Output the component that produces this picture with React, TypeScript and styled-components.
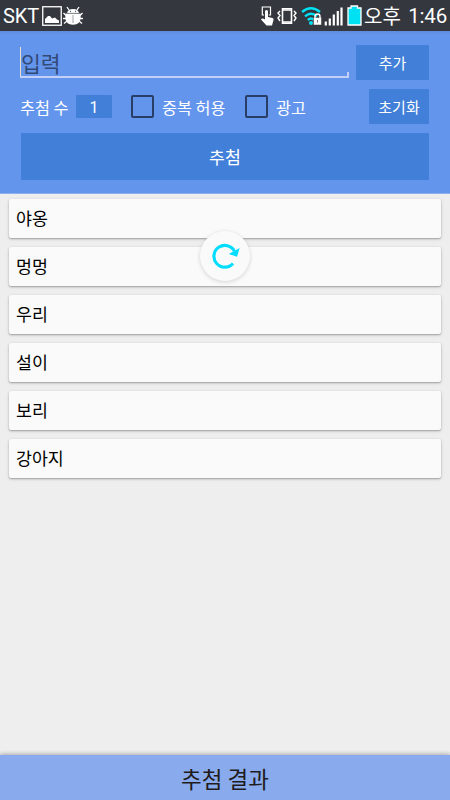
import React from "react";
import styled, { createGlobalStyle } from "styled-components";

const GlobalStyle = createGlobalStyle`
  * { box-sizing: border-box; }
  body { margin: 0; }
  button { border: 0; padding: 0; font-family: inherit; }
`;

const Screen = styled.div`
  display: flex;
  flex-direction: column;
  width: 450px;
  height: 800px;
  overflow: hidden;
  background: #eeeeee;
  font-family: "Noto Sans CJK KR", sans-serif;
  color: #fff;
`;

const StatusBar = styled.div`
  display: flex;
  align-items: center;
  flex: none;
  height: 31px;
  padding: 0 3px;
  background: #34373e;
  line-height: 30px;
`;

const Carrier = styled.span`
  width: 39px;
  font: 20px/34px Roboto, sans-serif;
  letter-spacing: -0.1px;
`;

const StatusIcons = styled.div`
  display: flex;
  align-items: center;
  margin-left: auto;
`;

const Meridiem = styled.span`
  width: 46px;
  padding-left: 2px;
  font-size: 20px;
  line-height: 29px;
  white-space: nowrap;
`;

const Clock = styled.span`
  width: 39px;
  font: 20.5px/34px Roboto, sans-serif;
  text-align: right;
  letter-spacing: -0.2px;
`;

const Controls = styled.div`
  flex: none;
  height: 163px;
  padding: 14px 21px 0;
  background: linear-gradient(#5f8cdd, #6495ed 4px);
  border-bottom: 1px solid #8eb0ee;
`;

const InputRow = styled.div`
  display: flex;
  justify-content: space-between;
  height: 35px;
`;

const Field = styled.div`
  width: 329px;
  height: 33px;
  margin-left: -1px;
  padding-left: 1px;
  border-bottom: 2px solid #c3cff6;
  background:
    linear-gradient(#e9dcc8, #e9dcc8) left 2px / 1px 30px no-repeat,
    linear-gradient(#c3cff6, #c3cff6) right bottom / 2px 4px no-repeat;
  color: #314a76;
  font-size: 21.5px;
  line-height: 35px;
`;

const ActionButton = styled.button<{ $width: number }>`
  width: ${(p) => p.$width}px;
  height: 35px;
  flex: none;
  border-radius: 1px;
  background: #417fd8;
  color: #fff;
  font-size: 15px;
  line-height: 35px;
`;

const OptionsRow = styled.div`
  display: flex;
  align-items: center;
  height: 35px;
  margin-top: 9px;
`;

const OptionLabel = styled.span<{ $width: number }>`
  width: ${(p) => p.$width}px;
  flex: none;
  margin-left: -1px;
  font-size: 16.3px;
  line-height: 34px;
  white-space: nowrap;
`;

const Count = styled.span`
  width: 36px;
  height: 23px;
  margin-right: 19px;
  border-radius: 1px;
  background: #417fd8;
  font: 16px/25px Roboto, sans-serif;
  text-align: center;
`;

const Checkbox = styled.span`
  width: 23px;
  height: 23px;
  flex: none;
  margin-right: 9px;
  border: 2px solid #283e66;
  border-radius: 2px;
`;

const DrawButton = styled.button`
  display: block;
  width: 408px;
  height: 47px;
  margin-top: 9px;
  border-radius: 1px;
  background: #417fd8;
  color: #fff;
  font-size: 17.3px;
  line-height: 47px;
`;

const ListArea = styled.div`
  position: relative;
  flex: 1;
  padding: 5px 9px;
`;

const Card = styled.div`
  height: 39px;
  margin-bottom: 9px;
  padding-left: 7px;
  border-radius: 2px;
  background: #fafafa;
  box-shadow: 0 1px 2px rgba(0, 0, 0, 0.3), 0 1px 4px rgba(0, 0, 0, 0.08);
  color: #000;
  font-size: 17.3px;
  line-height: 38px;
`;

const RefreshBadge = styled.div`
  position: absolute;
  top: 37px;
  left: 200px;
  width: 50px;
  height: 50px;
  border-radius: 50%;
  background: #fafafa;
  box-shadow: 0 1px 4px rgba(0, 0, 0, 0.16);
`;

const ResultBar = styled.div`
  flex: none;
  height: 45px;
  background: #89abed;
  box-shadow: 0 -1px 4px rgba(0, 0, 0, 0.3);
  color: #211b1b;
  font-size: 22.5px;
  line-height: 46px;
  text-align: center;
`;

const PictureIcon = () => (
  <svg width="20" height="20" viewBox="0 0 20 20">
    <rect x=".75" y=".75" width="18.5" height="18.5" fill="none" stroke="#fff" strokeWidth="1.3" />
    <path d="M3 17v-4l3-3 2 0 2 2.500 3-1 2 2 2 1V17z" fill="#fff" />
  </svg>
);

const BugIcon = () => (
  <svg width="22" height="20" viewBox="0 0 22 20">
    <path d="M5 7Q6 3 11 3t6 4z" fill="#fff" />
    <path d="M3.500 7.500h15q1.500 11.300-7.500 11.300T3.500 7.500" fill="#fff" />
    <path d="M7 4 5 1M15 4l2-3M4 9.500 1.500 7M4 12.500H1M5 15l-3 2.500M18 9.500l2.500-2.500M18 12.500h3M17 15l3 2.500" stroke="#fff" strokeWidth="1.3" />
    <path d="M4 7.300h14M11 9v8" stroke="#777a80" strokeWidth=".7" />
    <path d="M8.500 4.800v1M13.500 4.800v1" stroke="#34373e" />
  </svg>
);

const TouchIcon = () => (
  <svg width="16" height="22" viewBox="0 0 16 22">
    <path d="M4 10H2.300V2h8.200v8H8.800" fill="none" stroke="#fff" strokeWidth="1.2" />
    <path d="M5 6q1.500-2 3 0v6l4.500 1q1.500.5 1 2l-1.500 5.500H6.500l-5.500-6q1-1.800 4 0z" fill="#fff" />
  </svg>
);

const VibrateIcon = () => (
  <svg width="22" height="20" viewBox="0 0 22 20">
    <path d="M6.500 2.800h9v14.500h-9z" fill="none" stroke="#fff" strokeWidth="1.6" />
    <path d="M6.500 4h9M6.500 16h9" stroke="#fff" strokeWidth="1.5" />
    <path d="M4 5 2 7l2 2.500-2 2.500 2 3M18 5l2 2-2 2.500 2 2.500-2 3" fill="none" stroke="#fff" strokeWidth="1.4" />
  </svg>
);

const WifiGlyph = styled.svg`
  margin: 0 1px 0 3px;
`;

const WifiLockIcon = () => (
  <WifiGlyph width="22" height="20" viewBox="0 0 22 20">
    <g fill="none" stroke="#00e1f4" strokeWidth="2.400">
      <path d="M1 6q9-7.500 18 0M4 10.300q6-5 12 0M6.800 14q3.200-3 6.400 0" />
    </g>
    <circle cx="10" cy="17" r="2" fill="#00e1f4" />
    <path d="M12.500 11.500h8v7.500h-8z" fill="#fff" stroke="#34373e" strokeWidth=".5" />
    <path d="M14 12v-1.500a2.500 2.500 0 0 1 5 0V12" fill="none" stroke="#fff" strokeWidth="1.4" />
    <path d="M16.500 14v2.500" stroke="#777a80" />
  </WifiGlyph>
);

const SignalIcon = () => (
  <svg width="21" height="20" viewBox="0 0 21 20">
    <path d="M1.800 19.500v-4M5.800 19.500v-7M9.800 19.500V8.500M13.800 19.500V5M17.500 19.500V1.500" stroke="#fff" strokeWidth="2.200" />
  </svg>
);

const BatteryIcon = () => (
  <svg width="17" height="21" viewBox="-2 0 17 21">
    <path d="M4 1h6.500v2H14v17H1V3h3z" fill="#00e1f4" stroke="#fff" strokeWidth="1.3" />
  </svg>
);

const RefreshIcon = () => (
  <svg width="50" height="50" viewBox="0 0 50 50">
    <path d="M33 32.500A10.900 10.900 0 1 1 34.500 20.200" fill="none" stroke="#00ddff" strokeWidth="3.100" />
    <path d="M39.700 17 37 25.800 28.800 22.900z" fill="#00ddff" />
  </svg>
);

const participants = ["야옹", "멍멍", "우리", "설이", "보리", "강아지"];

export default function App() {
  return (
    <Screen>
      <GlobalStyle />
      <StatusBar>
        <Carrier>SKT</Carrier>
        <PictureIcon />
        <BugIcon />
        <StatusIcons>
          <TouchIcon />
          <VibrateIcon />
          <WifiLockIcon />
          <SignalIcon />
          <BatteryIcon />
          <Meridiem>오후</Meridiem>
          <Clock>1:46</Clock>
        </StatusIcons>
      </StatusBar>
      <Controls>
        <InputRow>
          <Field>입력</Field>
          <ActionButton $width={73}>추가</ActionButton>
        </InputRow>
        <OptionsRow>
          <OptionLabel $width={56}>추첨 수</OptionLabel>
          <Count>1</Count>
          <Checkbox />
          <OptionLabel $width={83}>중복 허용</OptionLabel>
          <Checkbox />
          <OptionLabel $width={93}>광고</OptionLabel>
          <ActionButton $width={60}>초기화</ActionButton>
        </OptionsRow>
        <DrawButton>추첨</DrawButton>
      </Controls>
      <ListArea>
        {participants.map((name) => (
          <Card key={name}>{name}</Card>
        ))}
        <RefreshBadge>
          <RefreshIcon />
        </RefreshBadge>
      </ListArea>
      <ResultBar>추첨 결과</ResultBar>
    </Screen>
  );
}
